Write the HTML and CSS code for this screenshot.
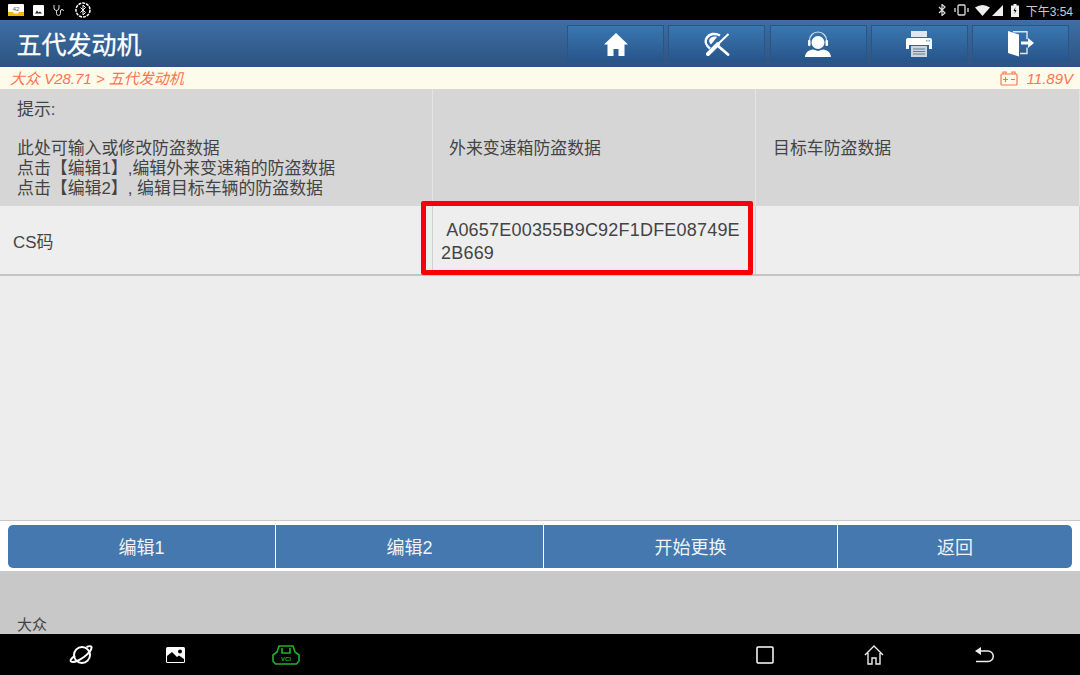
FILE: index.html
```html
<!DOCTYPE html>
<html lang="zh-CN">

<head>
    <meta charset="UTF-8">
    <title>五代发动机</title>
    <link rel="stylesheet" href="styles.css">
</head>

<body>
    <!-- Status bar -->
    <div class="status-bar">
        <div class="status-left">
            <svg width="16" height="12" viewBox="0 0 16 12"><rect width="16" height="12" rx="1" fill="#fff"/><path d="M0 8h5l1 1.500h4l1-1.500h5v3a1 1 0 0 1-1 1H1a1 1 0 0 1-1-1z" fill="#f5b800"/><text x="8" y="7" class="sd-text">42</text></svg>
            <svg width="11" height="11" viewBox="0 0 11 11"><rect width="11" height="11" rx="1" fill="#fff"/><path d="M2 8.500l2-3 1.500 2 1.500-1 2 2z" fill="#222"/></svg>
            <svg width="13" height="13" viewBox="0 0 13 13" fill="none" stroke="#ddd" stroke-width="1"><path d="M1 1v3a2.500 2.500 0 0 0 5 0V1M3.500 6.500v3a2 2 0 0 0 4 0V7a1.500 1.500 0 0 1 3 0"/></svg>
            <svg width="16" height="16" viewBox="0 0 16 16" fill="none" stroke="#fff"><circle cx="8" cy="8" r="7" stroke-width="1.500" stroke-dasharray="3 1"/><path d="M5.500 5.500l5 5L8 13V3l2.500 2.500-5 5" stroke-width="1"/></svg>
        </div>
        <div class="status-right">
            <svg width="8" height="12" viewBox="0 0 8 12" fill="none" stroke="#ddd" stroke-width="1.200"><path d="M1 3l6 6-3 2.500V.5L7 3 1 9"/></svg>
            <svg class="si-vibrate" width="15" height="12" viewBox="0 0 15 12" fill="none" stroke="#ddd" stroke-width="1.300"><rect x="4" y="1" width="7" height="10" rx="1"/><path d="M1 4v4M14 4v4"/></svg>
            <svg class="si-wifi" width="15" height="11" viewBox="0 0 15 11"><path d="M0 2.500Q7.500-2.500 15 2.500L7.500 11z" fill="#eee"/></svg>
            <svg class="si-signal" width="11" height="11" viewBox="0 0 11 11"><path d="M11 0v11H0z" fill="#eee"/></svg>
            <svg class="si-battery" width="8" height="13" viewBox="0 0 8 13"><path d="M2.500 0h3v1.500H8V13H0V1.500h2.500z" fill="#eee"/><path d="M4.500 3L2.500 7H4l-.5 3 2-4H4z" fill="#000"/></svg>
            <span class="clock">下午3:54</span>
        </div>
    </div>

    <!-- Header -->
    <div class="header">
        <h1>五代发动机</h1>
        <div class="toolbar">
            <div class="tool-btn">
                <svg width="24" height="24" viewBox="0 0 24 24" fill="#fff"><path d="M12 1L0 12.500h3.500V24h6v-7h5v7h6V12.500H24z"/></svg>
            </div>
            <div class="tool-btn">
                <svg width="26" height="24" viewBox="0 0 26 24" fill="none" stroke="#fff"><path d="M6 16.500C2 13.500 .5 9 3 5.500 5.500 2 11 .5 16 3.500" stroke-width="2.500"/><path d="M7 12.500C5 10.500 4.500 8 6 6.500s4-2.500 7-1.500z" fill="#fff" stroke="none"/><path d="M24.500 2L13 13" stroke-width="2"/><path d="M14 12L4 22" stroke-width="4" stroke-linecap="round"/><path d="M13.500 13.500L24 22.500" stroke-width="2.800" stroke-linecap="round"/></svg>
            </div>
            <div class="tool-btn">
                <svg width="26" height="26" viewBox="0 0 26 26"><circle cx="13" cy="11.500" r="6.500" fill="#fff"/><path d="M4.500 12V9.500a8.500 8.500 0 0 1 17 0V12" fill="none" stroke="#cfe0ee" stroke-width="1.200"/><rect x="3" y="9" width="2.500" height="6" rx="1" fill="#fff"/><rect x="20.500" y="9" width="2.500" height="6" rx="1" fill="#fff"/><path d="M0 26c.5-5 4-7 8-7.500l5 1.500 5-1.500c4 .5 7.500 2.500 8 7.500z" fill="#fff"/></svg>
            </div>
            <div class="tool-btn">
                <svg width="26" height="26" viewBox="0 0 26 26"><path d="M5 0h16v6H5z" fill="#dfe8f0"/><path d="M2 7h22a2 2 0 0 1 2 2v9h-3v-4H3v4H0V9a2 2 0 0 1 2-2z" fill="#fff"/><rect x="20" y="9" width="1.500" height="1.500" fill="#7fa3c6"/><rect x="22.500" y="9" width="1.500" height="1.500" fill="#7fa3c6"/><rect x="5" y="15" width="16" height="11" fill="#c9d6e2"/><path d="M7 18h12M7 20.500h12M7 23h12" stroke="#5d7f9f"/></svg>
            </div>
            <div class="tool-btn">
                <svg width="26" height="26" viewBox="0 0 26 26"><path d="M0 0l11 3.500V25.500L0 22z" fill="#fff"/><path d="M5 .7h14v7.500M19 16.500v6h-7" fill="none" stroke="#dbe6f0" stroke-width="1.400"/><path d="M13 10.500h7V7l6 5-6 5v-3.500h-7z" fill="#fff"/></svg>
            </div>
        </div>
    </div>

    <!-- Breadcrumb -->
    <div class="crumb-bar">
        <span class="crumb">大众 V28.71 &gt; 五代发动机</span>
        <div class="voltage">
            <svg width="18" height="15" viewBox="0 0 18 15" fill="none" stroke="#ff7350" stroke-width="1.200"><rect x="1" y="3" width="16" height="11" rx="1"/><path d="M3 3V1h3v2M12 3V1h3v2M3 8.500h5M5.500 6v5M11 8.500h4"/></svg>
            <span>11.89V</span>
        </div>
    </div>

    <!-- Data table -->
    <div class="table">
        <div class="row row-head">
            <div class="cell cell-hint">
                <p>提示:</p>
                <p class="hint-lines">此处可输入或修改防盗数据<br>点击【编辑1】,编辑外来变速箱的防盗数据<br>点击【编辑2】, 编辑目标车辆的防盗数据</p>
            </div>
            <div class="cell cell-col">外来变速箱防盗数据</div>
            <div class="cell cell-col cell-target">目标车防盗数据</div>
        </div>
        <div class="row row-data">
            <div class="cell cell-label">CS码</div>
            <div class="cell cell-value">
                <span class="code">&nbsp;A0657E00355B9C92F1DFE08749E2B669</span>
                <div class="highlight"></div>
            </div>
            <div class="cell"></div>
        </div>
    </div>

    <!-- Bottom buttons -->
    <div class="actions">
        <div class="action action-1">编辑1</div>
        <div class="action">编辑2</div>
        <div class="action">开始更换</div>
        <div class="action action-4">返回</div>
    </div>

    <div class="footer"><span>大众</span></div>

    <!-- Navigation bar -->
    <div class="nav-bar">
        <div class="nav-left">
            <svg width="26" height="24" viewBox="0 0 26 24" fill="none" stroke="#fff" stroke-width="2"><circle cx="13" cy="12" r="8"/><path d="M6 12.500c-4 3-5 5-4 6 2 1.500 8-1 13-4.500s8-8 7.500-10c-.5-1-2.500-1-5 0"/></svg>
            <svg width="19" height="16" viewBox="0 0 19 16"><rect width="19" height="16" rx="1.500" fill="#fff"/><path d="M1 9l5-4 5 5 2-1.500 5 3.500v3H1z" fill="#000"/><circle cx="14" cy="4.500" r="2" fill="#000"/></svg>
            <svg width="28" height="20" viewBox="0 0 28 20" fill="none" stroke="#1fb32c" stroke-width="1.600"><path d="M7 1h14l2 6 4 3v6l-2.500 3h-21L1 16v-6l4-3z"/><path d="M10 3v5h8V3"/><text x="14" y="16" class="vci-text">VCI</text></svg>
        </div>
        <div class="nav-right">
            <svg width="18" height="18" viewBox="0 0 18 18" fill="none" stroke="#fff" stroke-width="1.500"><rect x="1" y="1" width="16" height="16" rx="1"/></svg>
            <svg width="20" height="20" viewBox="0 0 20 20" fill="none" stroke="#eee" stroke-width="1.400"><path d="M1 10l9-9 9 9M4 8v11h4v-6h4v6h4V8"/></svg>
            <svg width="20" height="17" viewBox="0 0 20 17" fill="none" stroke="#eee" stroke-width="1.500"><path d="M6 5h8a4.500 4.500 0 0 1 0 10.500H2"/><path d="M7 1v8L1 5z" fill="#eee" stroke="none"/></svg>
        </div>
    </div>
</body>

</html>
```

FILE: styles.css
```css
/* General Styling */
body {
    font-family: "Liberation Sans", "Noto Sans CJK SC", sans-serif;
    background-color: #ededed;
    margin: 0;
    padding: 0;
    width: 1080px;
    height: 675px;
    overflow: hidden;
    display: flex;
    flex-direction: column;
}

svg {
    display: block;
}

/* Status bar */
.status-bar {
    height: 20px;
    background-color: #000;
    display: flex;
    align-items: center;
    justify-content: space-between;
    padding: 0 7px 0 8px;
    flex: none;
}

.status-left,
.status-right {
    display: flex;
    align-items: center;
}

.status-left {
    gap: 9px;
}

.si-vibrate {
    margin-left: 8px;
}

.si-wifi {
    margin-left: 6px;
}

.si-signal {
    margin-left: 2px;
}

.si-battery {
    margin-left: 8px;
}

.sd-text {
    font-size: 6px;
    text-anchor: middle;
    fill: #555;
}

.clock {
    color: #ccc;
    font-size: 12px;
    margin-left: 7px;
}

/* Header */
.header {
    height: 47px;
    background: linear-gradient(#3c6ea5, #2d5380);
    border-top: 1px solid #4472a6;
    box-sizing: border-box;
    display: flex;
    align-items: center;
    justify-content: space-between;
    padding: 0 11px 0 16.500px;
    flex: none;
}

h1 {
    margin: 0 0 3px;
    font-size: 25px;
    font-weight: normal;
    color: #fff;
    -webkit-text-stroke: 0.3px #fff;
}

.toolbar {
    display: flex;
    gap: 4.250px;
}

.tool-btn {
    width: 97px;
    height: 38px;
    box-sizing: border-box;
    background: linear-gradient(#3a77b0, #27548a);
    border: 1px solid #2a5585;
    display: flex;
    align-items: center;
    justify-content: center;
}

/* Breadcrumb */
.crumb-bar {
    height: 22px;
    background-color: #fffbea;
    color: #ff7350;
    font-size: 15px;
    font-style: italic;
    display: flex;
    align-items: center;
    justify-content: space-between;
    padding: 0 7px 0 10px;
    flex: none;
}

.crumb {
    padding-bottom: 1px;
}

.voltage {
    display: flex;
    align-items: center;
    gap: 9px;
}

/* Data table */
.table {
    height: 432px;
    flex: none;
    border-bottom: 1px solid #c8c8c8;
    box-sizing: border-box;
}

.row {
    display: grid;
    grid-template-columns: 433px 323px 1fr;
}

.cell {
    border-right: 1px solid #d0d0d0;
    color: #444;
    font-size: 16.900px;
    box-sizing: border-box;
}

.row-head {
    height: 117px;
    background-color: #d6d6d6;
}

.row-head .cell {
    border-right-color: #e4e4e4;
}

.cell-hint {
    padding: 11px 17px 0;
    line-height: 20px;
}

.cell-hint p {
    margin: 0;
}

.hint-lines {
    padding-top: 19px;
}

.cell-col {
    display: flex;
    align-items: center;
    padding: 0 0 3px 16px;
}

.cell-target {
    padding-left: 17px;
}

.row-data {
    height: 70px;
    background-color: #eeeeee;
    border-bottom: 2px solid #c4c4c4;
    box-sizing: border-box;
}

.cell-label {
    display: flex;
    align-items: center;
    padding: 1px 0 0 13px;
}

.cell-value {
    position: relative;
    display: flex;
    align-items: center;
    padding: 3px 10px 0 8px;
}

.code {
    font-size: 18px;
    line-height: 23px;
    word-break: break-all;
    letter-spacing: 0.2px;
}

/* red marker drawn over the value cell */
.highlight {
    position: absolute;
    left: -12px;
    top: -5px;
    width: 332px;
    height: 74px;
    box-sizing: border-box;
    border: 5px solid #f8000a;
    border-radius: 2px;
}

/* Bottom buttons */
.actions {
    height: 50px;
    background-color: #fff;
    padding: 4px 8px 3px;
    box-sizing: border-box;
    display: grid;
    grid-template-columns: 267px 267px 293px 1fr;
    gap: 1px;
    flex: none;
}

.action {
    background-color: #4478ae;
    color: #eef3f8;
    font-size: 18px;
    padding-bottom: 2px;
    display: flex;
    align-items: center;
    justify-content: center;
}

.action-1 {
    border-radius: 5px 0 0 5px;
}

.action-4 {
    border-radius: 0 5px 5px 0;
}

.footer {
    height: 63px;
    background-color: #c8c8c8;
    color: #444;
    font-size: 15px;
    padding-left: 17px;
    display: flex;
    align-items: flex-end;
    flex: none;
}

/* Navigation bar */
.nav-bar {
    flex: 1;
    background-color: #000;
    display: flex;
    align-items: center;
    justify-content: space-between;
    padding: 0 86px 0 69px;
}

.nav-left {
    display: flex;
    align-items: center;
}

.nav-left svg:nth-child(2) {
    margin-left: 71px;
}

.nav-left svg:nth-child(3) {
    margin-left: 87px;
}

.vci-text {
    font-size: 6px;
    font-weight: bold;
    text-anchor: middle;
    fill: #1fb32c;
    stroke: none;
}

.nav-right {
    display: flex;
    align-items: center;
    gap: 90px;
}
```
